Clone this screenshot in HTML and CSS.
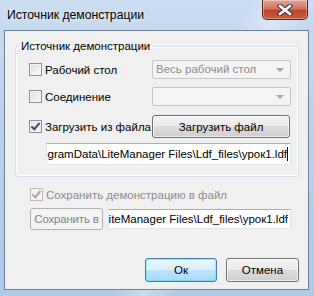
FILE: index.html
```html
<!DOCTYPE html>
<html lang="ru">
<head>
    <meta charset="UTF-8">
    <title>Источник демонстрации</title>
    <link rel="stylesheet" href="styles.css">
</head>
<body>

    <div class="window">
        <div class="titlebar">
            <span class="caption">Источник демонстрации</span>
            <div class="close">
                <svg width="16" height="12" viewBox="0 0 16 12">
                    <path d="M3 2 L13 10 M13 2 L3 10" stroke="#3a3a3a" stroke-width="4.6" stroke-linecap="square"/>
                    <path d="M3 2 L13 10 M13 2 L3 10" stroke="#fff" stroke-width="2.6" stroke-linecap="square"/>
                </svg>
            </div>
        </div>

        <div class="client">
            <fieldset class="group">
                <legend>Источник демонстрации</legend>

                <div class="row row-1">
                    <label class="check"><span class="box"></span>Рабочий стол</label>
                    <div class="combo">Весь рабочий стол<span class="arrow"></span></div>
                </div>

                <div class="row row-2">
                    <label class="check"><span class="box"></span>Соединение</label>
                    <div class="combo"><span class="arrow"></span></div>
                </div>

                <div class="row row-3">
                    <label class="check"><span class="box checked"></span>Загрузить из файла</label>
                    <button class="btn load">Загрузить файл</button>
                </div>

                <div class="field path-1">
                    <span>C:\ProgramData\LiteManager Files\Ldf_files\урок1.ldf<i class="caret"></i></span>
                </div>
            </fieldset>

            <label class="check save-check disabled"><span class="box checked"></span>Сохранить демонстрацию в файл</label>

            <div class="save-row">
                <button class="btn save" disabled>Сохранить в</button>
                <div class="field path-2">
                    <span>C:\ProgramData\LiteManager Files\Ldf_files\урок1.ldf</span>
                </div>
            </div>

            <div class="actions">
                <button class="btn default">Ок</button>
                <button class="btn">Отмена</button>
            </div>
        </div>
    </div>

</body>
</html>
```

FILE: styles.css
```css
* {
    box-sizing: border-box;
}

body {
    margin: 0;
    padding: 0;
    font-family: "Liberation Sans", Arial, sans-serif;
    font-size: 11.5px;
    color: #000;
}

.window {
    width: 314px;
    height: 296px;
    display: flex;
    flex-direction: column;
    background:
        linear-gradient(115deg, rgba(255,255,255,0) 55%, rgba(255,255,255,0.35) 62%, rgba(255,255,255,0) 70%),
        linear-gradient(to bottom, #c9dcf0 0%, #bcd2ea 40%, #aecae7 100%);
    overflow: hidden;
}

.titlebar {
    height: 30px;
    flex-shrink: 0;
    display: flex;
    justify-content: space-between;
    align-items: flex-start;
}

.caption {
    font-size: 12.2px;
    margin: 8px 0 0 7px;
    color: #000;
    text-shadow: 0 0 6px rgba(255,255,255,0.9);
}

.close {
    width: 46px;
    height: 20px;
    margin-right: 6px;
    border: 1px solid #5a2020;
    border-top: none;
    border-radius: 0 0 5px 5px;
    background: linear-gradient(to bottom, #e2a494 0%, #d27663 45%, #c2422a 55%, #cc5c3e 100%);
    box-shadow: inset 0 0 0 1px rgba(255,255,255,0.35);
    display: flex;
    justify-content: center;
    align-items: center;
}

.client {
    flex: 1;
    margin: 0 5px 6px 4px;
    background: #f0f0f0;
    border: 1px solid #6e8199;
    display: flex;
    flex-direction: column;
}

.group {
    width: 284px;
    min-width: 0;
    margin: 8px 0 0 10px;
    padding: 7px 7px 11px 13px;
    border: 1px solid #d5dfe5;
    border-radius: 3px;
    box-shadow: inset 0 0 0 1px #fff;
}

.group legend {
    padding: 0 2px;
    margin-left: -10px;
    line-height: 14px;
}

.row {
    display: flex;
    justify-content: space-between;
    align-items: center;
}

.row-1,
.row-2 {
    height: 19px;
}

.row-2 {
    margin-top: 8px;
}

.row-3 {
    height: 23px;
    margin-top: 9px;
}

.check {
    display: flex;
    align-items: center;
    gap: 3px;
    white-space: nowrap;
}

.box {
    width: 13px;
    height: 13px;
    flex-shrink: 0;
    border: 1px solid #8e8f8f;
    background: linear-gradient(135deg, #dcdcdc, #fbfbfb);
    box-shadow: inset 0 0 0 1px #f4f4f4;
    position: relative;
}

.box.checked::after {
    content: "";
    position: absolute;
    left: 3px;
    top: 0px;
    width: 3px;
    height: 7px;
    border: solid #3a4a7a;
    border-width: 0 2px 2px 0;
    transform: rotate(40deg);
}

.check.disabled {
    color: #8d8d8d;
}

.check.disabled .box {
    border-color: #bcbcbc;
    background: #f4f4f4;
}

.check.disabled .box.checked::after {
    border-color: #a8a8a8;
}

.combo {
    width: 139px;
    height: 19px;
    border: 1px solid #c5c5c5;
    border-radius: 2px;
    background: #f4f4f4;
    color: #8d8d8d;
    padding-left: 3px;
    line-height: 17px;
    position: relative;
}

.arrow {
    position: absolute;
    right: 6px;
    top: 7px;
    border-left: 4px solid transparent;
    border-right: 4px solid transparent;
    border-top: 4px solid #a7a7a7;
}

.btn {
    font-family: inherit;
    font-size: 11.5px;
    color: #000;
    white-space: nowrap;
    border: 1px solid #707070;
    border-radius: 3px;
    background: linear-gradient(to bottom, #f2f2f2 0%, #ebebeb 49%, #dddddd 50%, #cfcfcf 100%);
    box-shadow: inset 0 0 0 1px rgba(255,255,255,0.7);
    padding: 0;
}

.btn.load {
    width: 138px;
    height: 23px;
    margin-right: 1px;
}

.field {
    height: 22px;
    border: 1px solid #abadb3;
    border-color: #abadb3 #dbdfe6 #e3e9ef #e2e3ea;
    background: #fff;
    display: flex;
    justify-content: flex-end;
    align-items: center;
    overflow: hidden;
    white-space: nowrap;
    padding-right: 2px;
}

.field span {
    flex-shrink: 0;
}

.path-1 {
    width: 245px;
    margin: 5px 0 0 17px;
}

.caret {
    display: inline-block;
    width: 1px;
    height: 14px;
    background: #000;
    vertical-align: -3px;
}

.save-check {
    margin: 11px 0 0 25px;
    align-self: flex-start;
}

.save-row {
    display: flex;
    align-items: center;
    gap: 5px;
    margin: 7px 0 0 25px;
}

.btn.save {
    width: 73px;
    height: 22px;
    border-color: #adb2b5;
    background: #f4f4f4;
    box-shadow: none;
    color: #838383;
    letter-spacing: -0.2px;
}

.path-2 {
    width: 183px;
    height: 20px;
}

.actions {
    margin-top: auto;
    margin-bottom: 7px;
    display: flex;
    justify-content: flex-end;
    gap: 9px;
    padding-right: 9px;
}

.actions .btn {
    width: 72px;
    height: 24px;
}

.actions .btn + .btn {
    width: 73px;
}

.btn.default {
    border-color: #3c7fb1;
    background: linear-gradient(to bottom, #eaf6fd 0%, #d9f0fc 49%, #bee6fd 50%, #a7d9f5 100%);
    box-shadow: inset 0 0 0 1px #48d5fb66;
}
```
